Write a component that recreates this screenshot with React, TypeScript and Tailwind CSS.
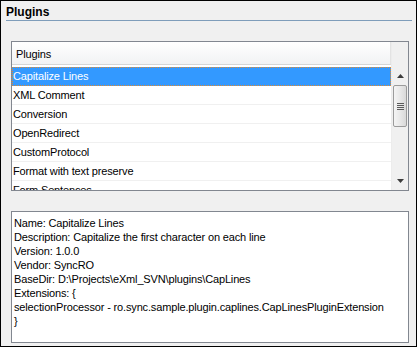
import React from "react";

const rows = [
  "Capitalize Lines",
  "XML Comment",
  "Conversion",
  "OpenRedirect",
  "CustomProtocol",
  "Format with text preserve",
  "Form Sentences",
];

const details = [
  "Name: Capitalize Lines",
  "Description: Capitalize the first character on each line",
  "Version: 1.0.0",
  "Vendor: SyncRO",
  "BaseDir: D:\\Projects\\eXml_SVN\\plugins\\CapLines",
  "Extensions: {",
  "selectionProcessor - ro.sync.sample.plugin.caplines.CapLinesPluginExtension",
  "}",
];

export default function App() {
  return (
    <div
      className="w-[417px] h-[347px] border border-black bg-[#f0f0f0] flex flex-col text-black"
      style={{ fontFamily: '"Liberation Sans", Arial, sans-serif' }}
    >
      <div className="ml-[5px] mr-[4px] pt-[4px] leading-[15px] text-[12px] font-bold border-b border-[#7f9dba]">
        Plugins
      </div>

      <div className="ml-[10px] mr-[7px] mt-[20px] h-[150px] border border-[#828790] bg-white flex">
        <div className="flex-1 flex flex-col overflow-hidden">
          <div className="h-[23px] shrink-0 border-b border-[#d5d5d5] border-r border-r-[#e3e3e3] bg-gradient-to-b from-white to-[#f1f2f4] flex items-center pl-[4px] pt-[3px] text-[11px] tracking-[-0.15px]">
            Plugins
          </div>
          <div className="h-[2px] shrink-0" />
          {rows.map((r, i) => (
            <div
              key={r}
              className={
                i === 0
                  ? "h-[19px] shrink-0 bg-[#3399ff] text-white border border-dotted border-[#e0892f] flex items-center pl-0 text-[11px] tracking-[-0.15px] whitespace-nowrap"
                  : "h-[19px] shrink-0 border-b border-[#f0f0f0] flex items-center pl-[1px] text-[11px] tracking-[-0.15px] whitespace-nowrap"
              }
            >
              {r}
            </div>
          ))}
        </div>
        <div className="w-[17px] shrink-0 bg-[#f0f0f0] flex flex-col border-l border-[#ececec]">
          <div className="h-[24px] shrink-0" />
          <div className="h-[19px] shrink-0 flex items-center justify-center">
            <svg width="7" height="4" viewBox="0 0 7 4">
              <path d="M3.5 0 L7 4 L0 4 Z" fill="#3c3c3c" />
            </svg>
          </div>
          <div className="h-[42px] shrink-0 mx-[1px] rounded-[2px] border border-[#9b9b9b] bg-gradient-to-r from-[#f4f4f4] via-[#e8e8e8] to-[#d9d9d9] flex flex-col items-center justify-center gap-[1px]">
            <div className="w-[7px] h-[1px] bg-[#5a5a5a]" />
            <div className="w-[7px] h-[1px] bg-[#5a5a5a]" />
            <div className="w-[7px] h-[1px] bg-[#5a5a5a]" />
            <div className="w-[7px] h-[1px] bg-[#5a5a5a]" />
          </div>
          <div className="flex-1" />
          <div className="h-[18px] shrink-0 flex items-center justify-center">
            <svg width="7" height="4" viewBox="0 0 7 4">
              <path d="M0 0 L7 0 L3.5 4 Z" fill="#3c3c3c" />
            </svg>
          </div>
        </div>
      </div>

      <div className="ml-[10px] mr-[7px] mt-[20px] h-[132px] border border-[#828790] bg-white pl-[2px] pt-[4px] text-[11px] leading-[14px] tracking-[-0.15px]">
        {details.map((d) => (
          <div key={d} className="whitespace-nowrap">
            {d}
          </div>
        ))}
      </div>
    </div>
  );
}
